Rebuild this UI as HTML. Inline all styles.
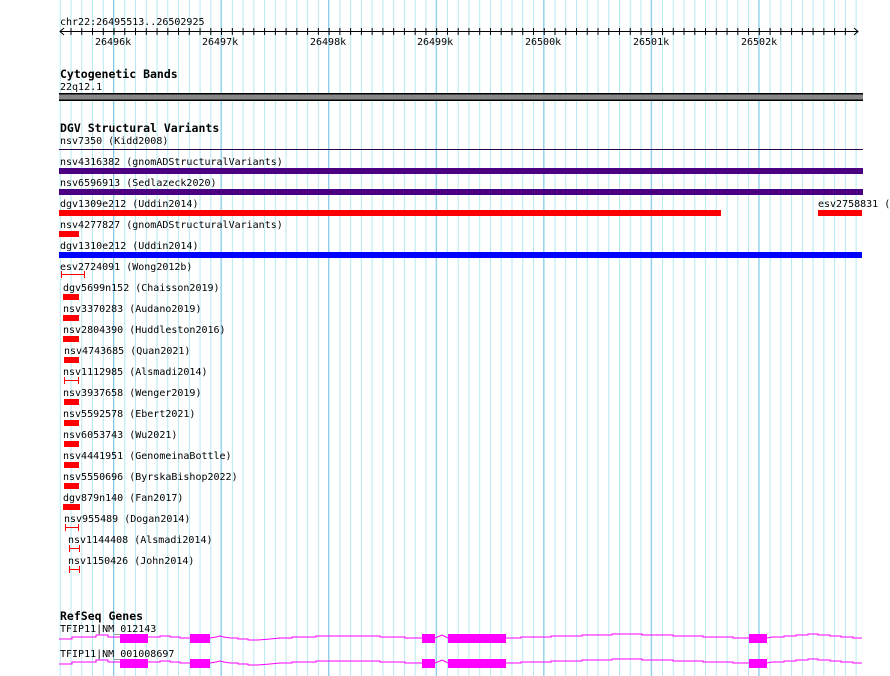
<!DOCTYPE html>
<html><head><meta charset="utf-8"><style>
html,body{margin:0;padding:0;background:#fff;}
svg{display:block;}
text{font-family:"DejaVu Sans Mono","Liberation Mono",monospace;font-size:10px;fill:#000;}
.b{font-weight:bold;font-size:11.5px;}
</style></head><body>
<svg width="890" height="676" viewBox="0 0 890 676" xmlns="http://www.w3.org/2000/svg">
<defs>
<pattern id="mn" patternUnits="userSpaceOnUse" x="59.75" y="0" width="10.755" height="676">
<rect x="0" y="0" width="1" height="676" fill="#b4e9f2"/>
</pattern>
<pattern id="mj" patternUnits="userSpaceOnUse" x="113" y="0" width="107.55" height="676">
<rect x="0" y="0" width="1" height="676" fill="#86c8ea"/>
</pattern>
<pattern id="tk" patternUnits="userSpaceOnUse" x="59.75" y="0" width="10.755" height="676">
<rect x="0" y="28" width="1" height="7" fill="#000"/>
</pattern>
</defs>
<rect x="59" y="0" width="804" height="676" fill="url(#mn)"/>
<rect x="59" y="0" width="804" height="676" fill="url(#mj)"/>

<text x="60" y="25">chr22:26495513..26502925</text>
<rect x="60" y="31" width="798" height="1" fill="#000"/>
<rect x="62" y="28" width="792" height="7" fill="url(#tk)"/>
<path d="M64 28 L60 31.5 L64 35 M854 28 L858 31.5 L854 35" stroke="#000" fill="none"/>
<text x="95" y="45">26496k</text>
<text x="202" y="45">26497k</text>
<text x="310" y="45">26498k</text>
<text x="417" y="45">26499k</text>
<text x="525" y="45">26500k</text>
<text x="633" y="45">26501k</text>
<text x="741" y="45">26502k</text>

<text class="b" x="60" y="78">Cytogenetic Bands</text>
<text x="60" y="90">22q12.1</text>
<rect x="59" y="93" width="804" height="8" fill="#000"/>
<rect x="59" y="94.5" width="804" height="5" fill="#888"/>

<text class="b" x="60" y="132">DGV Structural Variants</text>
<text x="60" y="144">nsv7350 (Kidd2008)</text>
<rect x="59" y="149" width="804" height="1" fill="#2d0050"/>
<text x="60" y="165">nsv4316382 (gnomADStructuralVariants)</text>
<rect x="59" y="168" width="804" height="6" fill="#4b0082"/>
<text x="60" y="186">nsv6596913 (Sedlazeck2020)</text>
<rect x="59" y="189" width="804" height="6" fill="#4b0082"/>
<text x="60" y="207">dgv1309e212 (Uddin2014)</text>
<rect x="59" y="210" width="662" height="6" fill="#ff0000"/>
<text x="818" y="207">esv2758831 (</text>
<rect x="818" y="210" width="44" height="6" fill="#ff0000"/>
<text x="60" y="228">nsv4277827 (gnomADStructuralVariants)</text>
<rect x="59" y="231" width="20" height="6" fill="#ff0000"/>
<text x="60" y="249">dgv1310e212 (Uddin2014)</text>
<rect x="59" y="252" width="803" height="6" fill="#0000ff"/>

<text x="60" y="270">esv2724091 (Wong2012b)</text>
<text x="63" y="291">dgv5699n152 (Chaisson2019)</text>
<text x="63" y="312">nsv3370283 (Audano2019)</text>
<text x="63" y="333">nsv2804390 (Huddleston2016)</text>
<text x="64" y="354">nsv4743685 (Quan2021)</text>
<text x="63" y="375">nsv1112985 (Alsmadi2014)</text>
<text x="63" y="396">nsv3937658 (Wenger2019)</text>
<text x="63" y="417">nsv5592578 (Ebert2021)</text>
<text x="63" y="438">nsv6053743 (Wu2021)</text>
<text x="63" y="459">nsv4441951 (GenomeinaBottle)</text>
<text x="63" y="480">nsv5550696 (ByrskaBishop2022)</text>
<text x="63" y="501">dgv879n140 (Fan2017)</text>
<text x="64" y="522">nsv955489 (Dogan2014)</text>
<text x="68" y="543">nsv1144408 (Alsmadi2014)</text>
<text x="68" y="564">nsv1150426 (John2014)</text>
<g fill="#ff0000">
<rect x="61" y="274" width="24" height="1"/><rect x="61" y="271" width="1" height="7"/><rect x="84" y="271" width="1" height="7"/>
<rect x="63" y="294" width="16" height="6"/>
<rect x="63" y="315" width="16" height="6"/>
<rect x="63" y="336" width="16" height="6"/>
<rect x="64" y="357" width="15" height="6"/>
<rect x="64" y="380" width="15" height="1"/><rect x="64" y="377" width="1" height="7"/><rect x="78" y="377" width="1" height="7"/>
<rect x="64" y="399" width="15" height="6"/>
<rect x="64" y="420" width="15" height="6"/>
<rect x="64" y="441" width="15" height="6"/>
<rect x="64" y="462" width="15" height="6"/>
<rect x="64" y="483" width="15" height="6"/>
<rect x="63" y="504" width="17" height="6"/>
<rect x="65" y="527" width="14" height="1"/><rect x="65" y="524" width="1" height="7"/><rect x="78" y="524" width="1" height="7"/>
<rect x="69" y="548" width="11" height="1"/><rect x="69" y="545" width="1" height="7"/><rect x="79" y="545" width="1" height="7"/>
<rect x="69" y="569" width="11" height="1"/><rect x="69" y="566" width="1" height="7"/><rect x="79" y="566" width="1" height="7"/>
</g>

<text class="b" x="60" y="620">RefSeq Genes</text>
<text x="60" y="632">TFIP11|NM_012143</text>
<g id="gene">
<polyline fill="none" stroke="#ff00ff" stroke-width="1" points="59,639 72,639 72,637 96,637 96,635 108,635 108,637 120,637 148,637 160,637 160,636 170,636 170,637 180,637 180,638 190,638 210,638 216,637 220,636 224,637 230,638 238,638 238,639 248,639 248,640 258,640 270,639 280,638 292,638 292,637 303,637 316,637 316,636 330,636 354,636 354,636 380,636 380,637 405,637 405,638 422,638 435,638 440,636 442,635 444,636 448,638 506,638 521,638 521,637 551,637 551,636 582,636 582,635 612,635 612,634 642,634 642,635 673,635 673,636 703,636 703,637 733,637 733,638 749,638 767,638 772,637 784,637 784,636 796,636 796,635 808,635 808,634 818,634 818,635 830,635 830,636 841,636 841,637 853,637 853,638 862,638"/>
<rect x="120" y="634" width="28" height="9" fill="#ff00ff"/>
<rect x="190" y="634" width="20" height="9" fill="#ff00ff"/>
<rect x="422" y="634" width="13" height="9" fill="#ff00ff"/>
<rect x="448" y="634" width="58" height="9" fill="#ff00ff"/>
<rect x="749" y="634" width="18" height="9" fill="#ff00ff"/>
</g>
<text x="60" y="657">TFIP11|NM_001008697</text>
<use href="#gene" y="25"/>
</svg>
</body></html>
